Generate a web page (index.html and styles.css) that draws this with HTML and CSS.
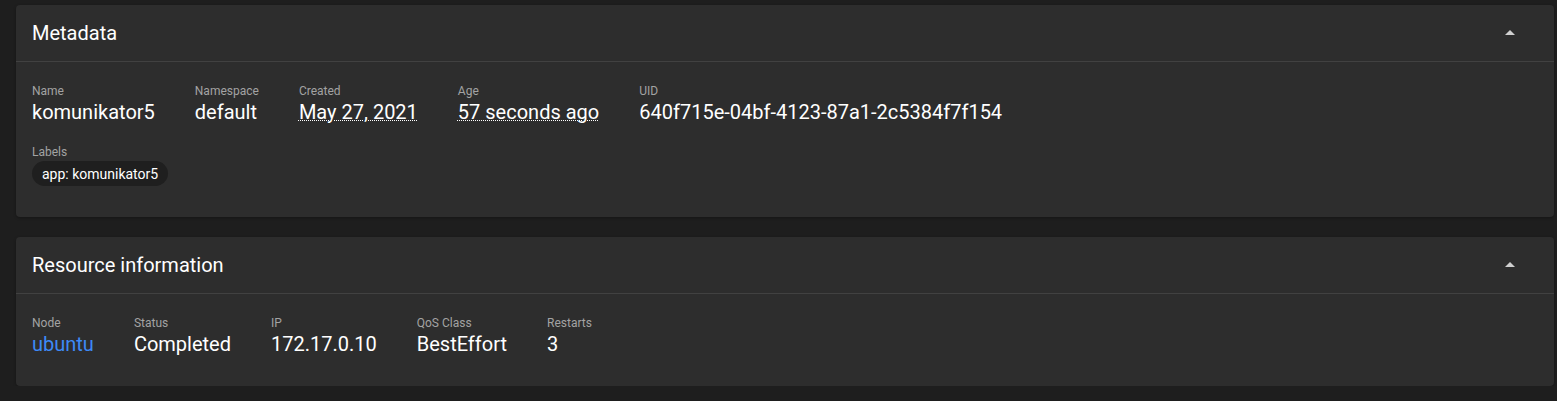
FILE: index.html
```html
<!DOCTYPE html>
<html lang="en">
<head>
<meta charset="utf-8">
<title>Pod details</title>
<link rel="stylesheet" href="styles.css">
</head>
<body>
<div class="page">
  <section class="card">
    <header class="card-header">
      <h2 class="card-title">Metadata</h2>
      <svg class="indicator" viewBox="0 0 24 24" width="24" height="24"><path d="M7 14l5-5 5 5z"/></svg>
    </header>
    <div class="card-body">
      <div class="props">
        <div class="prop"><div class="prop-label">Name</div><div class="prop-value">komunikator5</div></div>
        <div class="prop"><div class="prop-label">Namespace</div><div class="prop-value">default</div></div>
        <div class="prop"><div class="prop-label">Created</div><div class="prop-value dotted">May 27, 2021</div></div>
        <div class="prop"><div class="prop-label">Age</div><div class="prop-value dotted">57 seconds ago</div></div>
        <div class="prop"><div class="prop-label">UID</div><div class="prop-value">640f715e-04bf-4123-87a1-2c5384f7f154</div></div>
      </div>
      <div class="labels">
        <div class="prop-label">Labels</div>
        <div class="chips"><span class="chip">app: komunikator5</span></div>
      </div>
    </div>
  </section>
  <section class="card">
    <header class="card-header">
      <h2 class="card-title">Resource information</h2>
      <svg class="indicator" viewBox="0 0 24 24" width="24" height="24"><path d="M7 14l5-5 5 5z"/></svg>
    </header>
    <div class="card-body card-body-plain">
      <div class="props">
        <div class="prop"><div class="prop-label">Node</div><div class="prop-value"><a class="link" href="#">ubuntu</a></div></div>
        <div class="prop"><div class="prop-label">Status</div><div class="prop-value">Completed</div></div>
        <div class="prop"><div class="prop-label">IP</div><div class="prop-value">172.17.0.10</div></div>
        <div class="prop"><div class="prop-label">QoS Class</div><div class="prop-value">BestEffort</div></div>
        <div class="prop"><div class="prop-label">Restarts</div><div class="prop-value">3</div></div>
      </div>
    </div>
  </section>
</div>
</body>
</html>
```
FILE: styles.css
```css
html, body {
  margin: 0;
  padding: 0;
  background: #1e1e1e;
  font-family: Roboto, "Liberation Sans", sans-serif;
  color: #fff;
}
.page {
  display: flex;
  flex-direction: column;
  gap: 20px;
  padding: 5px 3px 0 16px;
}
.card {
  background: #2d2d2d;
  border-radius: 4px;
  box-shadow: 0 1px 3px rgba(0,0,0,0.3);
}
.card-header {
  height: 56px;
  display: flex;
  align-items: center;
  justify-content: space-between;
  padding: 0 32px 0 16px;
  border-bottom: 1px solid #414141;
}
.card-title {
  margin: 0;
  font-size: 20px;
  font-weight: 400;
  color: #fff;
}
.indicator {
  fill: #cfcfcf;
  display: block;
}
.card-body {
  padding: 21px 16px 31px;
}
.card-body-plain {
  padding-bottom: 29px;
}
.props {
  display: flex;
  gap: 40px;
}
.prop-label {
  font-size: 12px;
  line-height: 16px;
  color: #a3a3a3;
}
.prop-value {
  font-size: 20px;
  line-height: 26px;
  color: #fff;
  white-space: nowrap;
}
.dotted {
  text-decoration: underline dotted;
  text-decoration-thickness: 1px;
}
.link {
  color: #3d8af7;
  text-decoration: none;
}
.labels {
  margin-top: 19px;
}
.chips {
  display: flex;
  margin-top: 1px;
}
.chip {
  display: inline-flex;
  align-items: center;
  height: 25px;
  padding: 0 10px;
  border-radius: 13px;
  background: #1f1f1f;
  font-size: 14px;
  color: #fff;
}
```
